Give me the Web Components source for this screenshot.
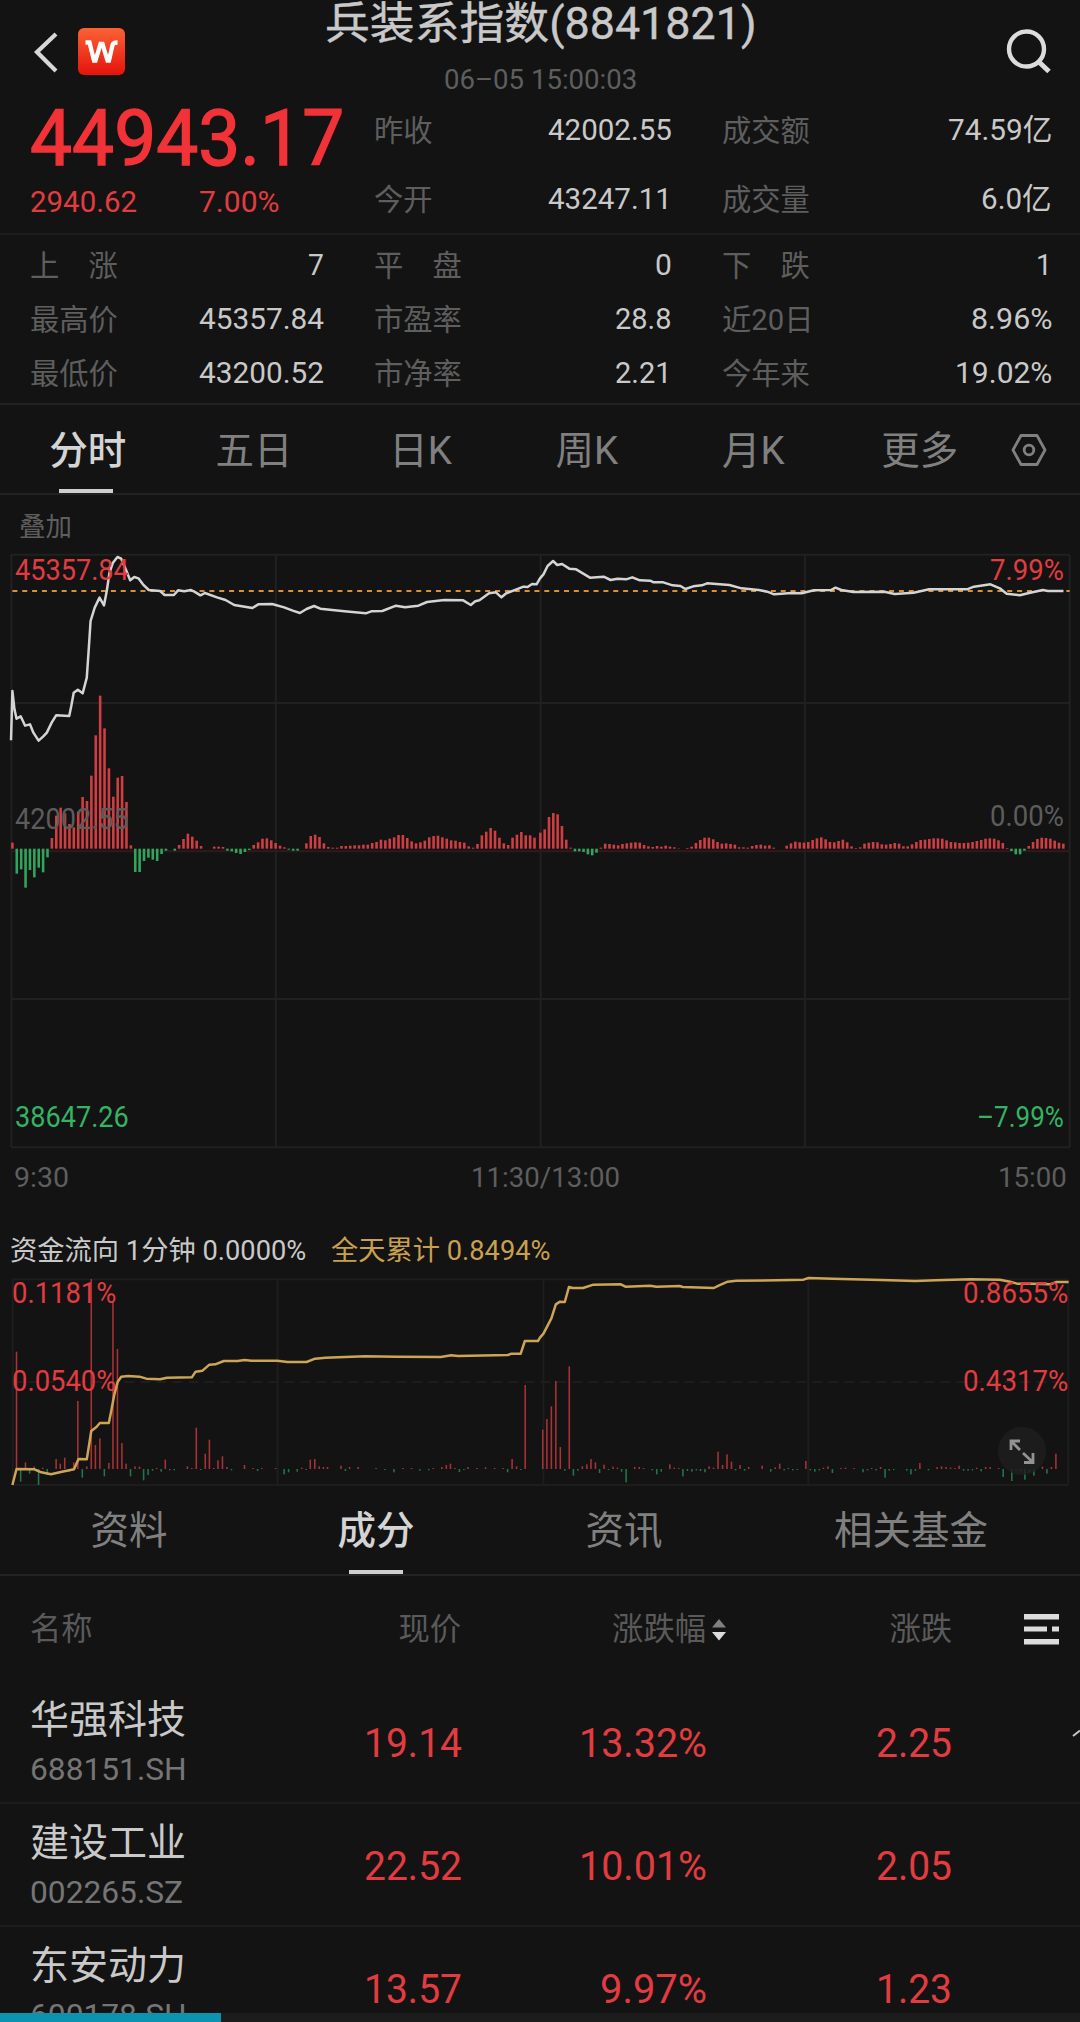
<!DOCTYPE html>
<html lang="zh-CN">
<head>
<meta charset="utf-8">
<title>兵装系指数(8841821)</title>
<style>
  :root {
    --bg: #131313;
    --line: #222;
    --muted: #5e5e5e;
    --tab: #808080;
    --text: #c9c9c9;
    --red: #e23c41;
    --green: #34b364;
    --gold: #c9a050;
  }
  body {
    margin: 0;
    width: 1080px;
    height: 2022px;
    overflow: hidden;
    background: var(--bg);
    color: var(--text);
    font-family: Roboto, "Noto Sans CJK SC", sans-serif;
    font-size: 30px;
  }
</style>
</head>
<body>
<index-page></index-page>

<script>
// Текст, ужатый по горизонтали до ширины w
class FitText extends HTMLElement {
  connectedCallback() {
    const w = Number(this.getAttribute('w'));
    this.attachShadow({ mode: 'open' });
    this.shadowRoot.innerHTML = `
      <style>
        :host { display: inline-block; width: ${w}px; white-space: nowrap; text-align: left; flex-shrink: 0; }
        span { display: inline-block; transform-origin: 0 50%; }
      </style>
      <span><slot></slot></span>
    `;
    const span = this.shadowRoot.querySelector('span');
    span.style.transform = `scaleX(${w / span.offsetWidth})`;
  }
}
customElements.define('fit-text', FitText);

class TopBar extends HTMLElement {
  connectedCallback() {
    this.attachShadow({ mode: 'open' });
    this.shadowRoot.innerHTML = `
      <style>
        :host { display: flex; height: 95px; justify-content: space-between; }
        .side { width: 200px; display: flex; align-items: flex-start; box-sizing: border-box; }
        .left { padding: 28px 0 0 32px; gap: 20px; }
        .right { padding: 28px 27px 0 0; justify-content: flex-end; }
        .center { display: flex; flex-direction: column; align-items: center; }
        .title { font-size: 44px; line-height: 49px; font-weight: 400; -webkit-text-stroke: 0.4px; }
        .time { font-size: 28px; line-height: 32px; margin-top: 15px; color: var(--muted); }
      </style>
      <div class="side left">
        <svg width="26" height="48" viewBox="0 0 26 48"><path d="M24 6 L5 24 L24 43" fill="none" stroke="#d8d8d8" stroke-width="4.2"/></svg>
        <svg width="47" height="47" viewBox="0 0 47 47">
          <defs><linearGradient id="g" x1="0" y1="0" x2="0" y2="1"><stop offset="0" stop-color="#fb6235"/><stop offset="1" stop-color="#e4130c"/></linearGradient></defs>
          <rect width="47" height="47" rx="6" fill="url(#g)"/>
          <path d="M7.500 14.500 H11.500 L16 32.500 H17.500 L22.500 16 H24.500 L29.500 32.500 H31 L34.500 17 Q35 14.500 39.500 14.500" fill="none" stroke="#fff" stroke-width="4.3"/>
        </svg>
      </div>
      <div class="center">
        <div class="title"><fit-text w="431">兵装系指数(8841821)</fit-text></div>
        <div class="time"><fit-text w="193">06–05 15:00:03</fit-text></div>
      </div>
      <div class="side right">
        <svg width="48" height="48" viewBox="0 0 48 48"><circle cx="21.500" cy="21" r="17.500" fill="none" stroke="#dcdcdc" stroke-width="4.4"/><path d="M34 34 L44 43.500" stroke="#dcdcdc" stroke-width="5"/></svg>
      </div>
    `;
  }
}
customElements.define('top-bar', TopBar);

// Пара "подпись — значение"
class StatCell extends HTMLElement {
  connectedCallback() {
    this.attachShadow({ mode: 'open' });
    this.shadowRoot.innerHTML = `
      <style>
        :host { display: flex; justify-content: space-between; align-items: center; font-size: 30px; white-space: nowrap; }
        .label { color: var(--muted); font-size: 29.3px; padding-bottom: 4px; }
        .value { display: flex; line-height: 36px; }
      </style>
      <span class="label">${this.getAttribute('label')}</span>
      <span class="value"><fit-text w="${this.getAttribute('w')}">${this.getAttribute('value')}</fit-text></span>
    `;
  }
}
customElements.define('stat-cell', StatCell);

class QuoteBlock extends HTMLElement {
  connectedCallback() {
    this.attachShadow({ mode: 'open' });
    this.shadowRoot.innerHTML = `
      <style>
        :host { display: block; }
        .quote {
          display: grid;
          grid-template-columns: 344px 298px 380px;
          height: 138px;
          padding: 0 28px 0 30px;
          border-bottom: 2px solid #1c1c1c;
        }
        .quote .pair { display: grid; grid-template-rows: 69px 69px; }
        .quote .last { padding-left: 50px; }
        .now { color: #f13338; }
        .big { font-size: 77px; line-height: 88px; height: 87px; font-weight: 400; -webkit-text-stroke: 1.4px; }
        .diff { display: flex; gap: 62px; line-height: 40px; color: var(--red); }
        .stats {
          display: grid;
          grid-template-columns: 294px 298px 330px;
          column-gap: 50px;
          grid-auto-rows: 54px;
          height: 162px;
          padding: 3px 28px 3px 30px;
          border-bottom: 2px solid var(--line);
        }
      </style>
      <div class="quote">
        <div class="now">
          <div class="big"><fit-text w="314">44943.17</fit-text></div>
          <div class="diff"><fit-text w="107">2940.62</fit-text><fit-text w="80">7.00%</fit-text></div>
        </div>
        <div class="pair">
          <stat-cell label="昨收" value="42002.55" w="124"></stat-cell>
          <stat-cell label="今开" value="43247.11" w="124"></stat-cell>
        </div>
        <div class="pair last">
          <stat-cell label="成交额" value="74.59亿" w="104"></stat-cell>
          <stat-cell label="成交量" value="6.0亿" w="71"></stat-cell>
        </div>
      </div>
      <div class="stats">
        <stat-cell label="上　涨" value="7" w="16"></stat-cell>
        <stat-cell label="平　盘" value="0" w="17"></stat-cell>
        <stat-cell label="下　跌" value="1" w="16"></stat-cell>
        <stat-cell label="最高价" value="45357.84" w="125"></stat-cell>
        <stat-cell label="市盈率" value="28.8" w="57"></stat-cell>
        <stat-cell label="近20日" value="8.96%" w="81"></stat-cell>
        <stat-cell label="最低价" value="43200.52" w="125"></stat-cell>
        <stat-cell label="市净率" value="2.21" w="57"></stat-cell>
        <stat-cell label="今年来" value="19.02%" w="97"></stat-cell>
      </div>
    `;
  }
}
customElements.define('quote-block', QuoteBlock);

class TabItem extends HTMLElement {
  connectedCallback() {
    this.attachShadow({ mode: 'open' });
    this.shadowRoot.innerHTML = `
      <style>
        :host { display: flex; flex-direction: column; align-items: center; color: var(--tab); font-size: 38.5px; white-space: nowrap; }
        :host([active]) { color: #d4d4d4; font-weight: 500; }
        .text { height: var(--tab-height, 84px); line-height: var(--tab-line, 84px); position: relative; left: var(--tab-nudge, 0); }
        .bar { width: 54px; height: 4px; }
        :host([active]) .bar { background: #cfcfcf; }
      </style>
      <span class="text"><slot></slot></span>
      <span class="bar"></span>
    `;
  }
}
customElements.define('tab-item', TabItem);

class PeriodTabs extends HTMLElement {
  connectedCallback() {
    this.attachShadow({ mode: 'open' });
    this.shadowRoot.innerHTML = `
      <style>
        :host { display: grid; grid-template-columns: repeat(6, 166.4px) 1fr; height: 88px; padding-left: 3px; border-bottom: 2px solid var(--line); --tab-line: 91px; --tab-height: 84px; --tab-nudge: 1.5px; }
        .gear { margin: 26px 0 0 9px; }
      </style>
      <tab-item active>分时</tab-item>
      <tab-item>五日</tab-item>
      <tab-item>日K</tab-item>
      <tab-item>周K</tab-item>
      <tab-item>月K</tab-item>
      <tab-item>更多</tab-item>
      <svg class="gear" width="38" height="38" viewBox="0 0 38 38" fill="none" stroke="#808080" stroke-width="2.8">
        <path d="M11 4.500 H27 L35 19 L27 33.500 H11 L3 19 Z" stroke-linejoin="round"/><circle cx="19" cy="19" r="4.800"/>
      </svg>
    `;
  }
}
customElements.define('period-tabs', PeriodTabs);

// Левая и правая половины графика, сетка 3136 единиц на всю ширину
const HALF = 1568;
const shift = (pts) => pts.map(([x, y]) => [x + HALF, y]);
const parse = (s) => s.trim().split(/\s+/).map(p => p.split(',').map(Number));

const price = parse(`32,628 36,480 42,535 48,563 60,556 73,584 87,580 97,605 112,629 125,617 136,605 150,575 163,553 201,555
  207,525 214,485 226,476 240,487 252,440 258,350 263,270 275,230 289,200 302,223 310,180 318,125 328,95 341,78 352,83
  365,115 378,148 390,138 402,142 415,160 432,177 465,180 478,192 505,192 517,178 535,181 555,177 568,184 582,193 595,186
  630,199 655,207 680,222 733,231 750,220 790,219 825,229 850,239 871,246 890,234 912,225 930,233 1000,241 1062,247 1078,241
  1110,240 1150,224 1176,229 1215,224 1240,213 1290,207 1345,208 1367,222 1380,211 1392,208 1420,187 1440,184 1456,199
  1470,187 1500,175 1520,167 1532,168 1545,159 1558,160 1568,142`).concat(shift(parse(`10,130 22,105 38,90 50,102 64,99
  85,113 105,115 145,140 185,137 205,147 225,143 250,145 268,139 290,148 320,149 330,154 358,154 385,163 408,165 422,174
  445,166 470,163 485,157 550,162 585,172 635,177 660,182 680,190 730,186 760,187 795,178 845,177 858,170 875,177 910,183
  1000,182 1030,189 1085,185 1130,175 1240,175 1260,167 1308,160 1335,172 1355,188 1393,193 1420,186 1460,177 1475,180 1520,180`)));

const volumeLeft = [18, -75, -62, -117, -64, -86, -57, -71, -26, 32, 99, 123, 106, 74, 64, 111, 155, 143, 219, 340, 459,
  361, 241, 156, 213, 218, 140, 10, -70, -70, -37, -27, -33, -37, -16, -6, 0, -6, 11, 29, 45, 36, 24, 8, 0, 0, 6, 6, 5,
  -6, -8, -13, -16, -10, -4, 11, 19, 30, 31, 25, 17, 9, 4, -3, -6, -6, 0, 16, 38, 42, 35, 16, 5, 3, 3, 8, 8, 9, 10,
  10, 12, 12, 17, 20, 27, 25, 30, 34, 41, 41, 32, 22, 16, 19, 24, 34, 38, 39, 34, 30, 25, 24, 20, 18, 7, 3,
  14, 40, 51, 62, 54, 33, 16, 11, 33, 42, 50, 40, 40, 33];
const volumeRight = [48, 58, 95, 107, 103, 68, 27, 3, -8, -8, -10, -17, -20, -12, 3, 15, 14, 12, 10, 14, 16, 18, 19, 18, 11,
  7, 5, 8, 6, 9, 6, 4, 1, 0, 2, 6, 17, 26, 33, 33, 28, 20, 15, 16, 14, 12, 4, 4, 3, 8, 11, 12, 9, 10, 3, 0, 0, 9, 16, 21,
  19, 18, 20, 26, 31, 34, 28, 20, 19, 23, 27, 19, 7, 2, 4, 15, 18, 20, 19, 13, 12, 14, 17, 15, 7, 7, 13, 20, 26, 27, 29,
  31, 31, 30, 25, 20, 19, 17, 17, 18, 20, 23, 26, 30, 31, 30, 25, 17, 2, -7, -17, -17, -6, 8, 20, 29, 33, 32, 30, 24, 18, 15];

const flowLine = parse(`36,792 48,744 100,745 120,754 148,760 180,752 215,745 228,714 252,715 265,630 280,618 290,606 316,606
  323,570 332,520 342,482 352,467 372,465 405,467 425,473 465,475 485,470 557,469 568,452 588,449 608,431 625,430 650,420
  690,420 710,417 730,419 805,419 835,423 890,423 915,413 945,410 1060,406 1150,407 1280,408 1310,403 1330,405 1475,402
  1485,398 1512,398 1524,360 1562,360 1568,350`).concat(shift(parse(`10,338 33,292 46,250 58,242 72,243 84,198 95,201
  125,201 155,191 235,190 248,197 320,194 338,197 405,195 415,198 505,201 520,193 545,182 570,179 690,178 765,176 780,171
  850,173 990,177 1090,180 1150,178 1250,175 1335,176 1365,182 1385,188 1430,188 1480,190 1500,183 1535,183`)));

const flowBars = parse(`48,352 60,-38 74,20 86,-14 99,8 112,-48 124,4 137,-18 163,30 175,16 188,34 201,-8 214,20 226,204
  239,-26 252,8 265,570 277,72 290,92 303,-22 316,18 328,500 341,360 354,78 366,16 379,-22 392,8 405,7 417,-34 430,-18
  443,-5 455,3 468,-8 480,28 493,-4 506,-4 544,8 557,3 570,124 583,-3 596,46 608,88 621,3 633,26 646,38 659,6 672,-4 710,12
  735,3 748,-6 760,3 800,3 825,-16 838,-10 863,-8 876,4 889,-3 901,28 914,30 927,8 939,6 951,6 990,10 1003,-6 1015,6 1040,6
  1092,3 1118,-3 1144,-10 1170,3 1195,3 1219,-5 1245,-4 1258,3 1283,6 1296,12 1308,16 1321,3 1334,-9 1347,-3 1359,6 1385,3
  1410,5 1436,3 1461,3 1474,-10 1487,30 1500,8 1512,-3 1525,252`).concat(shift(parse(`8,118 20,150 33,188 46,264
  59,66 72,-5 85,308 97,-20 110,-5 123,8 136,14 148,30 161,20 173,-12 186,13 199,-3 212,7 225,4 237,-8 250,-40 275,6 288,6
  301,3 326,-4 339,-16 352,-8 377,14 390,4 403,3 415,-22 428,-6 441,-8 454,-4 466,-6 479,-10 491,8 504,4 517,52 530,12
  543,44 556,22 568,-4 581,12 594,-5 606,6 645,10 670,-8 683,5 696,16 709,-4 721,3 734,-4 747,-3 772,24 785,-4 798,-8
  811,-4 823,4 836,8 849,-12 874,3 887,4 912,3 938,-10 951,-4 963,3 976,-4 989,6 1002,-26 1014,-5 1027,-3 1065,-5 1077,-16
  1090,-5 1103,18 1128,-4 1153,6 1166,8 1179,6 1192,4 1205,3 1217,10 1230,-5 1243,-5 1256,-4 1268,4 1281,-7 1294,6 1307,6
  1332,3 1345,-24 1370,-36 1383,-6 1396,-8 1408,-32 1421,-10 1434,-20 1459,7 1472,-14 1485,6 1498,46`)));

const bar = (x, base, h, w, dim) => h === 0 ? '' :
  `<rect x="${x - w / 2}" y="${h > 0 ? base - h : base}" width="${w}" height="${Math.abs(h)}" fill="${h > 0 ? (dim ? '#a83236' : '#cf3e42') : (dim ? '#20784a' : '#30a55d')}"/>`;
const hline = (y, x1, x2, extra = '') => `<path d="M${x1} ${y} H${x2}" ${extra}/>`;
const vline = (x, y1, y2) => `<path d="M${x} ${y1} V${y2}"/>`;

class PriceChart extends HTMLElement {
  connectedCallback() {
    const bars = volumeLeft.map((h, i) => bar(36 + 12.74 * i, 953, h, 7.5)).join('') +
      volumeRight.map((h, i) => bar(HALF + 1 + 12.55 * i, 953, h, 7.5)).join('');
    this.attachShadow({ mode: 'open' });
    this.shadowRoot.innerHTML = `
      <style>
        :host { display: block; }
        .overlay { height: 51px; line-height: 64px; padding-left: 19px; font-size: 26.5px; color: var(--muted); box-sizing: border-box; }
        .plot { position: relative; height: 605px; }
        svg { display: block; }
        svg path, svg polyline { vector-effect: non-scaling-stroke; fill: none; }
        .tag { position: absolute; font-size: 29px; line-height: 34px; }
        .red { color: var(--red); }
        .gray { color: #5c5c5c; }
        .green { color: var(--green); }
        .axis { display: grid; grid-template-columns: 1fr auto 1fr; padding: 0 13px 0 14px; height: 54px; line-height: 54px; font-size: 28px; color: var(--muted); }
        .axis .mid { padding-left: 10px; }
        .axis div:last-child { text-align: right; }
      </style>
      <div class="overlay">叠加</div>
      <div class="plot">
        <svg width="1080" height="605" viewBox="0 45 3136 1815" preserveAspectRatio="none">
          <g stroke="#212121" stroke-width="2">
            ${[71, 516, 961, 1404, 1849].map(y => hline(y, 32, 3106)).join('')}
            ${[33, 801, 1570, 2337, 3106].map(x => vline(x, 71, 1849)).join('')}
          </g>
          <path d="M36 960 H3106" stroke="#2b1a19" stroke-width="2"/>
          ${bars}
          <path d="M36 180 H3106" stroke="#d99038" stroke-width="2.200" stroke-dasharray="5 4.850"/>
          <polyline points="${price.join(' ')}" stroke="#d4d4d4" stroke-width="2.500" stroke-linejoin="round"/>
        </svg>
        <div class="tag red" style="left:15px;top:7px"><fit-text w="114">45357.84</fit-text></div>
        <div class="tag red" style="right:16px;top:7px"><fit-text w="74">7.99%</fit-text></div>
        <div class="tag gray" style="left:15px;top:256px"><fit-text w="114">42002.55</fit-text></div>
        <div class="tag gray" style="right:16px;top:253px"><fit-text w="74">0.00%</fit-text></div>
        <div class="tag green" style="left:15px;top:554px"><fit-text w="114">38647.26</fit-text></div>
        <div class="tag green" style="right:16px;top:554px"><fit-text w="87">–7.99%</fit-text></div>
      </div>
      <div class="axis">
        <div><fit-text w="55">9:30</fit-text></div>
        <div class="mid"><fit-text w="149">11:30/13:00</fit-text></div>
        <div><fit-text w="69">15:00</fit-text></div>
      </div>
    `;
  }
}
customElements.define('price-chart', PriceChart);

class FlowChart extends HTMLElement {
  connectedCallback() {
    this.attachShadow({ mode: 'open' });
    this.shadowRoot.innerHTML = `
      <style>
        :host { display: block; padding-top: 26px; }
        .legend { display: flex; gap: 25px; padding-left: 10px; height: 40px; line-height: 40px; font-size: 27px; }
        .gold { color: var(--gold); }
        .plot { position: relative; height: 220px; }
        svg { display: block; }
        .chart path, .chart polyline { vector-effect: non-scaling-stroke; fill: none; }
        .tag { position: absolute; font-size: 29px; line-height: 34px; color: var(--red); }
        .expand { position: absolute; left: 998px; top: 156px; }
      </style>
      <div class="legend">
        <fit-text w="296">资金流向 1分钟 0.0000%</fit-text>
        <fit-text class="gold" w="219">全天累计 0.8494%</fit-text>
      </div>
      <div class="plot">
        <svg class="chart" width="1080" height="220" viewBox="0 150 3136 660" preserveAspectRatio="none">
          <g stroke="#1d1d1d" stroke-width="2">
            ${hline(175, 36, 3102)}${hline(792, 36, 3102)}
            ${hline(483, 36, 3102, 'stroke-dasharray="10 6"')}
            ${[37, 806, 1578, 2347, 3102].map(x => vline(x, 175, 792)).join('')}
          </g>
          ${flowBars.map(([x, h]) => bar(x, 744, h, 4.5, true)).join('')}
          <polyline points="${flowLine.join(' ')}" stroke="#cda557" stroke-width="2.500" stroke-linejoin="round"/>
        </svg>
        <div class="tag" style="left:12px;top:5px"><fit-text w="104">0.1181%</fit-text></div>
        <div class="tag" style="left:12px;top:93px"><fit-text w="104">0.0540%</fit-text></div>
        <div class="tag" style="right:12px;top:5px"><fit-text w="105">0.8655%</fit-text></div>
        <div class="tag" style="right:12px;top:93px"><fit-text w="105">0.4317%</fit-text></div>
        <svg class="expand" width="48" height="48" viewBox="0 0 48 48">
          <circle cx="24" cy="24" r="24" fill="#1e1e1e" fill-opacity=".85"/>
          <path d="M13 23 V14 H22 M13.500 14.500 L22 23 M35 26 V35.500 H26 M34.500 35 L25 26" fill="none" stroke="#929292" stroke-width="2.800"/>
        </svg>
      </div>
    `;
  }
}
customElements.define('flow-chart', FlowChart);

class SectionTabs extends HTMLElement {
  connectedCallback() {
    this.attachShadow({ mode: 'open' });
    this.shadowRoot.innerHTML = `
      <style>
        :host { display: grid; grid-template-columns: 258px 236px 260px 314px; height: 83px; border-bottom: 2px solid var(--line); --tab-line: 80px; --tab-height: 79px; }
      </style>
      <tab-item>资料</tab-item>
      <tab-item active>成分</tab-item>
      <tab-item>资讯</tab-item>
      <tab-item>相关基金</tab-item>
    `;
  }
}
customElements.define('section-tabs', SectionTabs);

class StockRow extends HTMLElement {
  connectedCallback() {
    const [name, code, now, pct, diff] = this.getAttribute('data').split('|');
    const wide = pct.length > 5 ? 128 : 107;
    this.attachShadow({ mode: 'open' });
    this.shadowRoot.innerHTML = `
      <style>
        :host {
          display: grid;
          grid-template-columns: 250px 182px 245px 245px;
          height: 121px;
          padding-left: 30px;
          border-bottom: 2px solid #1c1c1c;
        }
        .name { font-size: 39px; line-height: 48px; padding-top: 15px; }
        .code { font-size: 31.500px; line-height: 38px; margin-top: 7px; color: #757575; }
        .num { font-size: 41px; line-height: 125px; height: 121px; text-align: right; color: var(--red); }
      </style>
      <div>
        <div class="name">${name}</div>
        <div class="code"><fit-text w="${code.endsWith('Z') ? 153 : 157}">${code}</fit-text></div>
      </div>
      <div class="num"><fit-text w="98">${now}</fit-text></div>
      <div class="num"><fit-text w="${wide}">${pct}</fit-text></div>
      <div class="num"><fit-text w="76">${diff}</fit-text></div>
    `;
  }
}
customElements.define('stock-row', StockRow);

class StockTable extends HTMLElement {
  connectedCallback() {
    this.attachShadow({ mode: 'open' });
    this.shadowRoot.innerHTML = `
      <style>
        :host { display: block; }
        .head {
          display: grid;
          grid-template-columns: 250px 181px 266px 225px 1fr;
          align-items: center;
          height: 105px;
          padding-left: 30px;
          font-size: 31.3px;
          color: #5a5a5a;
        }
        .head span { padding-bottom: 5px; }
        .num { text-align: right; }
        .sort { display: flex; justify-content: flex-end; align-items: center; gap: 5px; }
        .menu { margin-left: 72px; }
      </style>
      <div class="head">
        <span>名称</span>
        <span class="num">现价</span>
        <div class="sort"><span>涨跌幅</span><svg width="16" height="24" viewBox="0 0 16 24"><path d="M8 2 L15 10.500 H1 Z" fill="#808080"/><path d="M8 23.500 L15 15 H1 Z" fill="#dcdcdc"/></svg></div>
        <span class="num">涨跌</span>
        <svg class="menu" width="36" height="32" viewBox="0 0 36 32" fill="#dcdcdc"><path d="M0 1 H35 V6.500 H0 Z M0 13.500 H23 V18.500 H0 Z M28 13.500 H35 V18.500 H28 Z M0 26 H35 V31.500 H0 Z"/></svg>
      </div>
      <stock-row data="华强科技|688151.SH|19.14|13.32%|2.25"></stock-row>
      <stock-row data="建设工业|002265.SZ|22.52|10.01%|2.05"></stock-row>
      <stock-row data="东安动力|600178.SH|13.57|9.97%|1.23"></stock-row>
    `;
  }
}
customElements.define('stock-table', StockTable);

class IndexPage extends HTMLElement {
  connectedCallback() {
    this.attachShadow({ mode: 'open' });
    this.shadowRoot.innerHTML = `
      <style>
        :host { display: block; position: relative; width: 1080px; height: 2022px; overflow: hidden; }
        .progress { position: absolute; left: 0; right: 0; bottom: 0; height: 9px; background: #1c1c1c; }
        .progress div { width: 221px; height: 9px; background: #0c93b0; }
        .edge { position: absolute; right: 0; top: 1727px; }
      </style>
      <top-bar></top-bar>
      <quote-block></quote-block>
      <period-tabs></period-tabs>
      <price-chart></price-chart>
      <flow-chart></flow-chart>
      <section-tabs></section-tabs>
      <stock-table></stock-table>
      <svg class="edge" width="8" height="10" viewBox="0 0 8 10"><path d="M1 9 L8 3.500" stroke="#c8c8c8" stroke-width="2"/></svg>
      <div class="progress"><div></div></div>
    `;
  }
}
customElements.define('index-page', IndexPage);
</script>
</body>
</html>
